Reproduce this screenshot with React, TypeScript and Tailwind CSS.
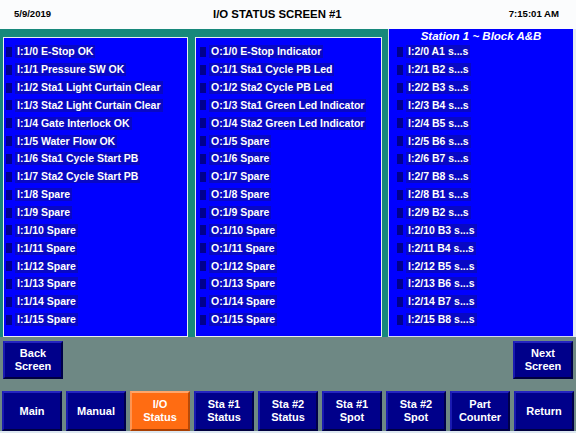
import React from 'react';

const inputs = [
  'I:1/0 E-Stop OK',
  'I:1/1 Pressure SW OK',
  'I:1/2 Sta1 Light Curtain Clear',
  'I:1/3 Sta2 Light Curtain Clear',
  'I:1/4 Gate Interlock OK',
  'I:1/5 Water Flow OK',
  'I:1/6 Sta1 Cycle Start PB',
  'I:1/7 Sta2 Cycle Start PB',
  'I:1/8 Spare',
  'I:1/9 Spare',
  'I:1/10 Spare',
  'I:1/11 Spare',
  'I:1/12 Spare',
  'I:1/13 Spare',
  'I:1/14 Spare',
  'I:1/15 Spare',
];

const outputs = [
  'O:1/0 E-Stop Indicator',
  'O:1/1 Sta1 Cycle PB Led',
  'O:1/2 Sta2 Cycle PB Led',
  'O:1/3 Sta1 Green Led Indicator',
  'O:1/4 Sta2 Green Led Indicator',
  'O:1/5 Spare',
  'O:1/6 Spare',
  'O:1/7 Spare',
  'O:1/8 Spare',
  'O:1/9 Spare',
  'O:1/10 Spare',
  'O:1/11 Spare',
  'O:1/12 Spare',
  'O:1/13 Spare',
  'O:1/14 Spare',
  'O:1/15 Spare',
];

const blocks = ['A1', 'B2', 'B3', 'B4', 'B5', 'B6', 'B7', 'B8', 'B1', 'B2', 'B3', 'B4', 'B5', 'B6', 'B7', 'B8'];
const station = blocks.map((b, i) => `I:2/${i} ${b} s...s`);

const nav = [
  ['Main'],
  ['Manual'],
  ['I/O', 'Status'],
  ['Sta #1', 'Status'],
  ['Sta #2', 'Status'],
  ['Sta #1', 'Spot'],
  ['Sta #2', 'Spot'],
  ['Part', 'Counter'],
  ['Return'],
];

function Row({ label }: { label: string }) {
  return (
    <div className="flex items-center h-[17.85px]">
      <span className="w-[6px] h-[10px] bg-[#00008e] shrink-0" />
      <span className="ml-[3px] pl-[2px] pr-[2px] bg-[#0808c4] text-white font-bold text-[10.5px] leading-[13px] whitespace-nowrap">
        {label}
      </span>
    </div>
  );
}

function Btn({ lines, active = false }: { lines: string[]; active?: boolean }) {
  return (
    <div
      className={`w-[60px] h-full flex flex-col items-center justify-center text-white font-bold text-[11px] leading-[13px] border-[2px] ${
        active
          ? 'bg-[#ff6c12] border-t-[#ffa56a] border-l-[#ff9450] border-r-[#b84a08] border-b-[#a84004]'
          : 'bg-[#00008a] border-t-[#2424c0] border-l-[#1a1ab0] border-r-[#00004a] border-b-[#000040]'
      }`}
    >
      {lines.map((l) => (
        <span key={l}>{l}</span>
      ))}
    </div>
  );
}

export default function App() {
  return (
    <div
      className="w-[576px] h-[433px] bg-[#e4ecf2] flex flex-col overflow-hidden"
      style={{ fontFamily: '"Liberation Sans", Arial, sans-serif' }}
    >
      {/* header */}
      <div className="h-[29px] bg-[#fbfcfd] flex items-center pl-[14px] pr-[17px] text-black font-bold">
        <span className="w-[199px] text-[9.5px]">5/9/2019</span>
        <span className="text-[11.4px]">I/O STATUS SCREEN #1</span>
        <span className="flex-1 text-right text-[9.6px]">7:15:01 AM</span>
      </div>

      {/* panels */}
      <div className="h-[308px] flex mr-[3px] bg-[#17887b]">
        <div className="ml-[3px] mt-[8px] w-[185px] border border-[#e8eef0] bg-[#0000ff] pl-[2px] pt-[5px]">
          {inputs.map((l) => (
            <Row key={l} label={l} />
          ))}
        </div>
        <div className="ml-[7px] mt-[8px] w-[187px] border border-[#e8eef0] bg-[#0000ff] pl-[4px] pt-[5px]">
          {outputs.map((l) => (
            <Row key={l} label={l} />
          ))}
        </div>
        <div className="ml-[6px] flex-1 border-l border-b border-[#d0d8f0] bg-[#0000ff] pl-[8px]">
          <div className="h-[14px] text-center pr-[8px] text-white font-bold italic text-[11.5px] leading-[14px]">
            Station 1 ~ Block A&amp;B
          </div>
          {station.map((l, i) => (
            <Row key={i} label={l} />
          ))}
        </div>
      </div>

      {/* lower area */}
      <div className="flex-1 bg-[#6e8884] flex flex-col">
        <div className="h-[38px] mt-[4px] flex justify-between px-[3px]">
          <Btn lines={['Back', 'Screen']} />
          <Btn lines={['Next', 'Screen']} />
        </div>
        <div className="h-[40px] mt-[12px] flex gap-[4px] pl-[2px]">
          {nav.map((n, i) => (
            <Btn key={i} lines={n} active={i === 2} />
          ))}
        </div>
        <div className="flex-1 bg-[#dde8f0]" />
      </div>
    </div>
  );
}
